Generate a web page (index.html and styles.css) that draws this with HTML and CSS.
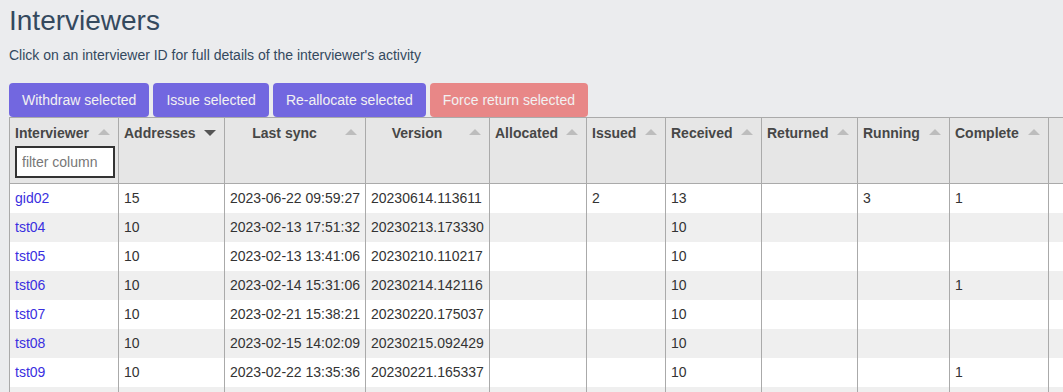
FILE: index.html
```html
<!DOCTYPE html>
<html>
<head>
<meta charset="utf-8">
<link rel="stylesheet" href="styles.css">
</head>
<body>
<h1 class="title">Interviewers</h1>
<p class="intro">Click on an interviewer ID for full details of the interviewer's activity</p>
<div class="actions">
  <button class="btn btn-primary">Withdraw selected</button>
  <button class="btn btn-primary">Issue selected</button>
  <button class="btn btn-primary">Re-allocate selected</button>
  <button class="btn btn-danger">Force return selected</button>
</div>
<table class="grid">
  <colgroup>
    <col class="c-int"><col class="c-addr"><col class="c-sync"><col class="c-ver"><col class="c-alloc"><col class="c-issued"><col class="c-recv"><col class="c-ret"><col class="c-run"><col class="c-comp"><col class="c-sb">
  </colgroup>
  <thead>
    <tr>
      <th><span class="hd">Interviewer</span><span class="sort"></span><input class="filter" type="text" placeholder="filter column"></th>
      <th><span class="hd">Addresses</span><span class="sort sort-desc"></span></th>
      <th class="center"><span class="hd">Last sync</span><span class="sort"></span></th>
      <th class="center"><span class="hd">Version</span><span class="sort"></span></th>
      <th><span class="hd">Allocated</span><span class="sort"></span></th>
      <th><span class="hd">Issued</span><span class="sort"></span></th>
      <th><span class="hd">Received</span><span class="sort"></span></th>
      <th><span class="hd">Returned</span><span class="sort"></span></th>
      <th><span class="hd">Running</span><span class="sort"></span></th>
      <th><span class="hd">Complete</span><span class="sort"></span></th>
      <th class="sb-head"></th>
    </tr>
  </thead>
  <tbody>
    <tr><td><a href="#">gid02</a></td><td>15</td><td>2023-06-22 09:59:27</td><td>20230614.113611</td><td></td><td>2</td><td>13</td><td></td><td>3</td><td>1</td><td class="sb"></td></tr>
    <tr><td><a href="#">tst04</a></td><td>10</td><td>2023-02-13 17:51:32</td><td>20230213.173330</td><td></td><td></td><td>10</td><td></td><td></td><td></td><td class="sb"></td></tr>
    <tr><td><a href="#">tst05</a></td><td>10</td><td>2023-02-13 13:41:06</td><td>20230210.110217</td><td></td><td></td><td>10</td><td></td><td></td><td></td><td class="sb"></td></tr>
    <tr><td><a href="#">tst06</a></td><td>10</td><td>2023-02-14 15:31:06</td><td>20230214.142116</td><td></td><td></td><td>10</td><td></td><td></td><td>1</td><td class="sb"></td></tr>
    <tr><td><a href="#">tst07</a></td><td>10</td><td>2023-02-21 15:38:21</td><td>20230220.175037</td><td></td><td></td><td>10</td><td></td><td></td><td></td><td class="sb"></td></tr>
    <tr><td><a href="#">tst08</a></td><td>10</td><td>2023-02-15 14:02:09</td><td>20230215.092429</td><td></td><td></td><td>10</td><td></td><td></td><td></td><td class="sb"></td></tr>
    <tr><td><a href="#">tst09</a></td><td>10</td><td>2023-02-22 13:35:36</td><td>20230221.165337</td><td></td><td></td><td>10</td><td></td><td></td><td>1</td><td class="sb"></td></tr>
    <tr class="filler"><td></td><td></td><td></td><td></td><td></td><td></td><td></td><td></td><td></td><td></td><td class="sb"></td></tr>
  </tbody>
</table>
</body>
</html>
```
FILE: styles.css
```css
html, body {
  overflow: hidden;
}
body {
  margin: 0;
  padding: 0 9px;
  background: #ebecee;
  font-family: "Liberation Sans", Arial, sans-serif;
  font-size: 14px;
  color: #333;
}
.title {
  margin: 5px 0 0;
  font-size: 28px;
  line-height: 32px;
  font-weight: normal;
  color: #34495e;
}
.intro {
  margin: 8px 0 0;
  line-height: 20px;
  color: #34495e;
}
.actions {
  display: flex;
  gap: 4px;
  margin-top: 18px;
  height: 34px;
}
.btn {
  height: 34px;
  padding: 0 13px;
  border: 0;
  border-radius: 4px;
  font-family: "Liberation Sans", Arial, sans-serif;
  font-size: 14px;
  color: #f2f2f2;
  cursor: pointer;
}
.btn-primary { background: #7267e0; }
.btn-danger { background: #e88787; }

.grid {
  border-collapse: collapse;
  table-layout: fixed;
  width: 1056px;
}
.c-int { width: 109px; }
.c-addr { width: 106px; }
.c-sync { width: 141px; }
.c-ver { width: 124px; }
.c-alloc { width: 97px; }
.c-issued { width: 79px; }
.c-recv { width: 96px; }
.c-ret { width: 96px; }
.c-run { width: 92px; }
.c-comp { width: 99px; }
.c-sb { width: 17px; }

.grid th {
  position: relative;
  background: #e6e6e6;
  border: 1px solid #aaa;
  padding: 5px 26px 5px 5px;
  text-align: left;
  vertical-align: top;
  font-weight: bold;
  color: #474747;
  line-height: 20px;
  white-space: nowrap;
}
.grid th.center { text-align: center; }
.grid th.sb-head { padding: 0; }
.hd { display: inline-block; }
.sort {
  position: absolute;
  top: 11px;
  right: 8px;
  width: 0;
  height: 0;
  border-left: 6px solid transparent;
  border-right: 6px solid transparent;
  border-bottom: 6px solid #bdbdbd;
}
.sort-desc {
  border-bottom: 0;
  border-top: 6px solid #555;
  top: 12px;
}
.filter {
  display: block;
  box-sizing: border-box;
  width: 100px;
  height: 32px;
  margin-top: 3px;
  padding: 0 5px;
  border: 2px solid #333;
  background: #fff;
  font-family: "Liberation Sans", Arial, sans-serif;
  font-size: 14px;
  color: #333;
}
.filter::placeholder { color: #777; }

.grid td {
  border-left: 1px solid #aaa;
  border-right: 1px solid #aaa;
  padding: 5px;
  height: 19px;
  line-height: 19px;
  white-space: nowrap;
  overflow: hidden;
}
.grid tbody tr:nth-child(odd) td { background: #fff; }
.grid tbody tr:nth-child(even) td { background: #efefef; }
.grid tbody td.sb { background: #898989; padding: 0; border: 0; }
.grid a {
  color: #3a2fe0;
  text-decoration: none;
}
```
